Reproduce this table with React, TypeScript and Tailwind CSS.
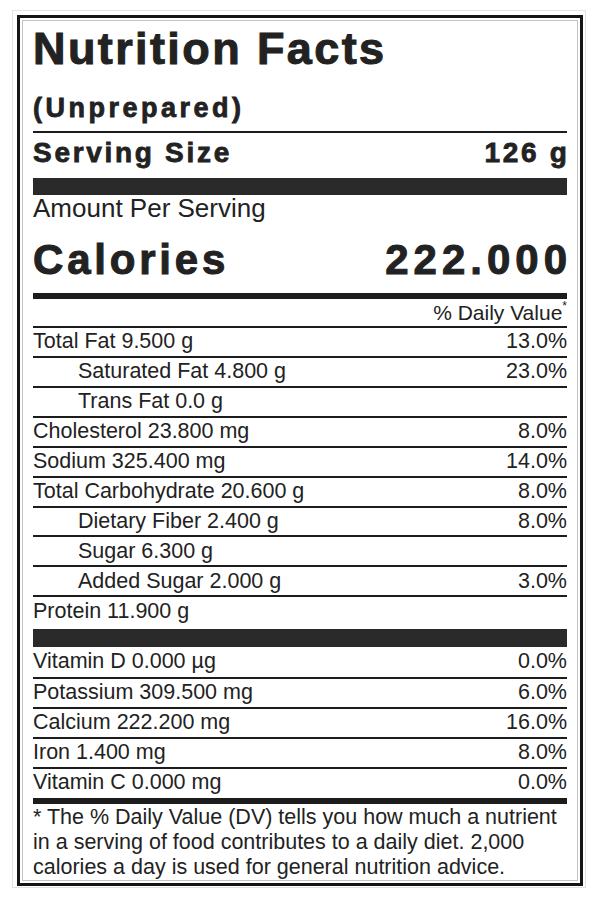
const nutrients = [
  { label: 'Total Fat 9.500 g', dv: '13.0%' },
  { label: 'Saturated Fat 4.800 g', dv: '23.0%', sub: true },
  { label: 'Trans Fat 0.0 g', dv: '', sub: true },
  { label: 'Cholesterol 23.800 mg', dv: '8.0%' },
  { label: 'Sodium 325.400 mg', dv: '14.0%' },
  { label: 'Total Carbohydrate 20.600 g', dv: '8.0%' },
  { label: 'Dietary Fiber 2.400 g', dv: '8.0%', sub: true },
  { label: 'Sugar 6.300 g', dv: '', sub: true },
  { label: 'Added Sugar 2.000 g', dv: '3.0%', sub: true },
  { label: 'Protein 11.900 g', dv: '' },
]

const minerals = [
  { label: 'Vitamin D 0.000 µg', dv: '0.0%' },
  { label: 'Potassium 309.500 mg', dv: '6.0%' },
  { label: 'Calcium 222.200 mg', dv: '16.0%' },
  { label: 'Iron 1.400 mg', dv: '8.0%' },
  { label: 'Vitamin C 0.000 mg', dv: '0.0%' },
]

function Row({
  label,
  dv,
  sub,
  first,
}: {
  label: string
  dv: string
  sub?: boolean
  first?: boolean
}) {
  return (
    <div
      className={`flex h-[30px] items-center justify-between text-[21.5px] leading-none ${
        first ? 'h-[28px]' : 'border-t-2 border-[#1c1c1c]'
      }`}
    >
      <span className={sub ? 'pl-[45px]' : ''}>{label}</span>
      <span>{dv}</span>
    </div>
  )
}

export default function App() {
  return (
    <div className="min-h-[900px] w-[594px] bg-white pl-[12px] pt-[10px] font-['Liberation_Sans',Arial,sans-serif] text-[#222]">
      <div className="h-[878px] w-[574px] border border-[#e2e2e2] pb-px pl-[4px] pr-[2px] pt-[4px]">
        <div className="h-[871px] border-[3px] border-[#151515] p-[2px]">
          <div className="flex h-full flex-col border border-[#c4c4c4] px-[10px] pt-[3px]">
            <h1 className="h-[50px] text-[45px] font-bold leading-[50px] tracking-[2.4px] [-webkit-text-stroke:1px_#222]">
              Nutrition Facts
            </h1>
            <div className="mt-[17px] h-[34px] text-[27px] font-bold leading-[34px] tracking-[3.5px] [-webkit-text-stroke:0.8px_#222]">
              (Unprepared)
            </div>
            <div className="mt-[6px] h-[2px] bg-[#1c1c1c]" />
            <div className="mt-[3px] flex h-[34px] items-center justify-between text-[28px] font-bold leading-[34px] [-webkit-text-stroke:0.8px_#222]">
              <span className="tracking-[2.7px]">Serving Size</span>
              <span className="-mr-[2.7px] tracking-[2.7px]">126 g</span>
            </div>
            <div className="mt-[8px] h-[17px] bg-[#2a2a2a]" />
            <div className="h-[26px] text-[26px] leading-[26px]">Amount Per Serving</div>
            <div className="mt-[18px] flex h-[42px] items-center justify-between text-[42px] font-bold leading-[42px] [-webkit-text-stroke:1px_#222]">
              <span className="tracking-[3.8px]">Calories</span>
              <span className="-mr-[5px] tracking-[5px]">222.000</span>
            </div>
            <div className="mt-[12px] h-[6px] bg-[#1c1c1c]" />
            <div className="flex h-[27px] items-center justify-end text-[21px] leading-none">
              % Daily Value<sup className="text-[12px]">*</sup>
            </div>
            {nutrients.map((n) => (
              <Row key={n.label} {...n} />
            ))}
            <div className="mt-[4px] h-[18px] bg-[#2a2a2a]" />
            {minerals.map((m, i) => (
              <Row key={m.label} {...m} first={i === 0} />
            ))}
            <div className="mt-px h-[6px] bg-[#1c1c1c]" />
            <p className="pt-[1px] text-[21.5px] leading-[25px]">
              * The % Daily Value (DV) tells you how much a nutrient
              <br />
              in a serving of food contributes to a daily diet. 2,000
              <br />
              calories a day is used for general nutrition advice.
            </p>
          </div>
        </div>
      </div>
    </div>
  )
}
